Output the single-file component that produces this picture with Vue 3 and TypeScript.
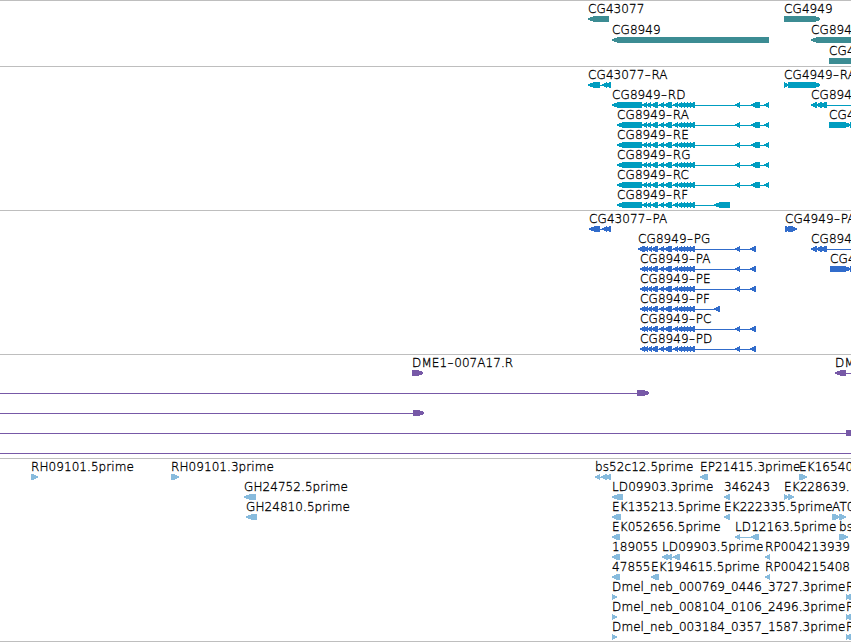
<script setup lang="ts">
import { ref } from 'vue';

type Dir = 'l' | 'r' | 'b'

interface Feature {
    label?: string
    x: number
    row: number
    // ligne d'intron [debut, fin]
    line?: [number, number]
    // exons [debut, fin]
    exons: [number, number][]
    dir: Dir
}

interface Track {
    name: string
    color: string
    height: number
    pitch: number
    features: Feature[]
}

const viewWidth = 851

// exons partagés par tous les transcrits de CG8949
const shared: [number, number][] = [
    [651, 658], [659, 664], [664, 672], [673, 678], [677, 682],
    [680, 685], [683, 688], [686, 691], [689, 695]
]
const rnaCore: [number, number][] = [[642, 647], [646, 651], ...shared]
const rnaEnd: [number, number][] = [[735, 740], [751, 760], [764, 769]]
const cdsEnd: [number, number][] = [[735, 740], [750, 756]]

const rna = (label: string, row: number, start: number): Feature => ({
    label, row, x: start, dir: 'l', line: [start + 5, 769],
    exons: [[start, 642], ...rnaCore, ...rnaEnd]
})

const cds = (label: string, row: number, start: number): Feature => ({
    label, row, x: start, dir: 'l', line: [start + 5, 756],
    exons: [[start, 645], [643, 648], [647, 652], ...shared, ...cdsEnd]
})

const tracks = ref<Track[]>([
    {
        name: 'gene', color: '#3c8c93', height: 66, pitch: 21,
        features: [
            { label: 'CG43077', x: 588, row: 0, exons: [[588, 609]], dir: 'l' },
            { label: 'CG4949', x: 784, row: 0, exons: [[784, 820]], dir: 'r' },
            { label: 'CG8949', x: 612, row: 1, exons: [[612, 769]], dir: 'l' },
            { label: 'CG894', x: 811, row: 1, exons: [[811, 860]], dir: 'l' },
            { label: 'CG4', x: 829, row: 2, exons: [[829, 860]], dir: 'b' }
        ]
    },
    {
        name: 'mrna', color: '#009dc0', height: 144, pitch: 20,
        features: [
            { label: 'CG43077-RA', x: 588, row: 0, line: [600, 611], exons: [[588, 600], [602, 607], [605, 611]], dir: 'l' },
            { label: 'CG4949-RA', x: 784, row: 0, line: [784, 790], exons: [[784, 789], [788, 820]], dir: 'r' },
            rna('CG8949-RD', 1, 612),
            { label: 'CG894', x: 811, row: 1, line: [815, 851], exons: [[811, 817], [816, 822], [820, 827]], dir: 'l' },
            rna('CG8949-RA', 2, 617),
            { label: 'CG4', x: 829, row: 2, line: [845, 851], exons: [[829, 850], [850, 860]], dir: 'r' },
            rna('CG8949-RE', 3, 617),
            rna('CG8949-RG', 4, 617),
            rna('CG8949-RC', 5, 617),
            { label: 'CG8949-RF', x: 617, row: 6, line: [622, 720], exons: [[617, 642], ...rnaCore, [714, 730]], dir: 'l' }
        ]
    },
    {
        name: 'cds', color: '#316ccb', height: 144, pitch: 20,
        features: [
            { label: 'CG43077-PA', x: 589, row: 0, line: [600, 611], exons: [[589, 600], [602, 607], [605, 611]], dir: 'l' },
            { label: 'CG4949-PA', x: 785, row: 0, exons: [[785, 791], [788, 797]], dir: 'r' },
            cds('CG8949-PG', 1, 638),
            { label: 'CG894', x: 811, row: 1, line: [815, 851], exons: [[811, 817], [816, 822], [820, 827]], dir: 'l' },
            cds('CG8949-PA', 2, 640),
            { label: 'CG4', x: 830, row: 2, line: [845, 851], exons: [[830, 850], [850, 860]], dir: 'r' },
            cds('CG8949-PE', 3, 640),
            { label: 'CG8949-PF', x: 640, row: 4, line: [645, 720], exons: [[640, 645], [643, 648], [647, 652], ...shared, [714, 720]], dir: 'l' },
            cds('CG8949-PC', 5, 640),
            cds('CG8949-PD', 6, 640)
        ]
    },
    {
        name: 'bac', color: '#7759a7', height: 104, pitch: 20,
        features: [
            { label: 'DME1-007A17.R', x: 412, row: 0, exons: [[412, 423]], dir: 'r' },
            { label: 'DM', x: 835, row: 0, line: [845, 851], exons: [[835, 846]], dir: 'l' },
            { x: 0, row: 1, line: [0, 640], exons: [[637, 649]], dir: 'r' },
            { x: 0, row: 2, line: [0, 415], exons: [[413, 424]], dir: 'r' },
            { x: 0, row: 3, line: [0, 848], exons: [[846, 860]], dir: 'b' },
            { x: 0, row: 4, line: [0, 851], exons: [], dir: 'b' }
        ]
    },
    {
        name: 'est', color: '#87bbdd', height: 183, pitch: 20,
        features: [
            { label: 'RH09101.5prime', x: 31, row: 0, exons: [[31, 38]], dir: 'r' },
            { label: 'RH09101.3prime', x: 171, row: 0, exons: [[171, 179]], dir: 'r' },
            { label: 'bs52c12.5prime', x: 595, row: 0, line: [598, 611], exons: [[595, 600], [601, 607], [605, 611]], dir: 'l' },
            { label: 'EP21415.3prime', x: 700, row: 0, exons: [[700, 708]], dir: 'l' },
            { label: 'EK16540', x: 799, row: 0, exons: [[799, 807]], dir: 'r' },
            { label: 'GH24752.5prime', x: 244, row: 1, exons: [[244, 256]], dir: 'l' },
            { label: 'LD09903.3prime', x: 612, row: 1, exons: [[612, 623]], dir: 'l' },
            { label: '346243', x: 724, row: 1, exons: [[724, 730]], dir: 'l' },
            { label: 'EK228639.', x: 784, row: 1, exons: [[784, 789], [788, 794]], dir: 'r' },
            { label: 'GH24810.5prime', x: 246, row: 2, exons: [[246, 257]], dir: 'l' },
            { label: 'EK135213.5prime', x: 612, row: 2, exons: [[612, 621]], dir: 'l' },
            { label: 'EK222335.5prime', x: 724, row: 2, exons: [[724, 730]], dir: 'l' },
            { label: 'AT0', x: 832, row: 2, exons: [[832, 840], [839, 846]], dir: 'r' },
            { label: 'EK052656.5prime', x: 612, row: 3, exons: [[612, 620]], dir: 'l' },
            { label: 'LD12163.5prime', x: 735, row: 3, line: [738, 753], exons: [[735, 740], [751, 759]], dir: 'l' },
            { label: 'bs', x: 839, row: 3, exons: [[839, 848]], dir: 'r' },
            { label: '189055', x: 612, row: 4, exons: [[612, 620]], dir: 'l' },
            { label: 'LD09903.5prime', x: 662, row: 4, line: [665, 680], exons: [[662, 668], [666, 672], [673, 680]], dir: 'l' },
            { label: 'RP004213939', x: 765, row: 4, exons: [[765, 770]], dir: 'l' },
            { label: '47855', x: 612, row: 5, exons: [[612, 620]], dir: 'l' },
            { label: 'EK194615.5prime', x: 651, row: 5, exons: [[651, 659]], dir: 'l' },
            { label: 'RP004215408', x: 765, row: 5, exons: [[765, 770]], dir: 'l' },
            { label: 'Dmel_neb_000769_0446_3727.3prime', x: 612, row: 6, exons: [[612, 617]], dir: 'r' },
            { label: 'R', x: 846, row: 6, exons: [[846, 851], [849, 855]], dir: 'r' },
            { label: 'Dmel_neb_008104_0106_2496.3prime', x: 612, row: 7, exons: [[612, 617]], dir: 'r' },
            { label: 'R', x: 846, row: 7, exons: [[846, 851], [849, 855]], dir: 'r' },
            { label: 'Dmel_neb_003184_0357_1587.3prime', x: 612, row: 8, exons: [[612, 617]], dir: 'r' },
            { label: 'R', x: 846, row: 8, exons: [[846, 851], [849, 855]], dir: 'r' }
        ]
    }
])

// forme d'un exon : rectangle avec une pointe de 5 ou 6px
const shape = (exon: [number, number], dir: Dir, y: number) => {
    const [a, b] = exon
    const long = b - a > 9
    const tip = long ? 6 : 5
    const top = y + (long ? 2 : 2.4)
    const bottom = y + (long ? 4 : 3.6)
    if (dir === 'l') return `${a},${top} ${a + tip},${y} ${b},${y} ${b},${y + 6} ${a + tip},${y + 6} ${a},${bottom}`
    if (dir === 'r') return `${a},${y} ${b - tip},${y} ${b},${top} ${b},${bottom} ${b - tip},${y + 6} ${a},${y + 6}`
    return `${a},${y} ${b},${y} ${b},${y + 6} ${a},${y + 6}`
}
</script>

<template>
<div class="browser">
    <section v-for="track in tracks" :key="track.name" class="track">
        <svg :width="viewWidth" :height="track.height - 1" :viewBox="`0 1 ${viewWidth} ${track.height - 1}`">
            <g v-for="(f, i) in track.features" :key="i">
                <g class="glyph" :fill="track.color">
                    <rect v-if="f.line" :x="f.line[0]" :y="f.row * track.pitch + 19" :width="f.line[1] - f.line[0]" height="1" />
                    <polygon v-for="(e, j) in f.exons" :key="j" :points="shape(e, f.dir, f.row * track.pitch + 16)" />
                </g>
                <text v-if="f.label" class="label" :x="f.x + 0.1" :y="f.row * track.pitch + 13"><template v-for="(part, k) in f.label.split('-')" :key="k"><tspan v-if="k > 0" class="dash" dy="1">-</tspan><tspan :dx="k > 0 ? 0.5 : 0" :dy="k > 0 ? -1 : 0">{{ part }}</tspan></template></text>
            </g>
        </svg>
    </section>
</div>
</template>

<style scoped>
.browser {
  display: flex;
  flex-direction: column;
  width: 851px;
  height: 642px;
  box-sizing: border-box;
  overflow: hidden;
  background: #ffffff;
  border-bottom: 1px solid #bebebe;
}

.track {
  border-top: 1px solid #bebebe;
}

.track svg {
  display: block;
  overflow: visible;
}

.glyph {
  shape-rendering: crispEdges;
}

.label {
  font-family: 'DejaVu Sans', sans-serif;
  font-size: 12px;
  font-weight: 200;
  letter-spacing: 0.06px;
  fill: #000000;
  stroke: #000000;
  stroke-width: 0.3px;
}

/* le tiret est plus large que celui de la police */
.dash {
  font-size: 18px;
  stroke-width: 0.1px;
}
</style>

<style>
body {
  margin: 0;
  background: #ffffff;
}
</style>
